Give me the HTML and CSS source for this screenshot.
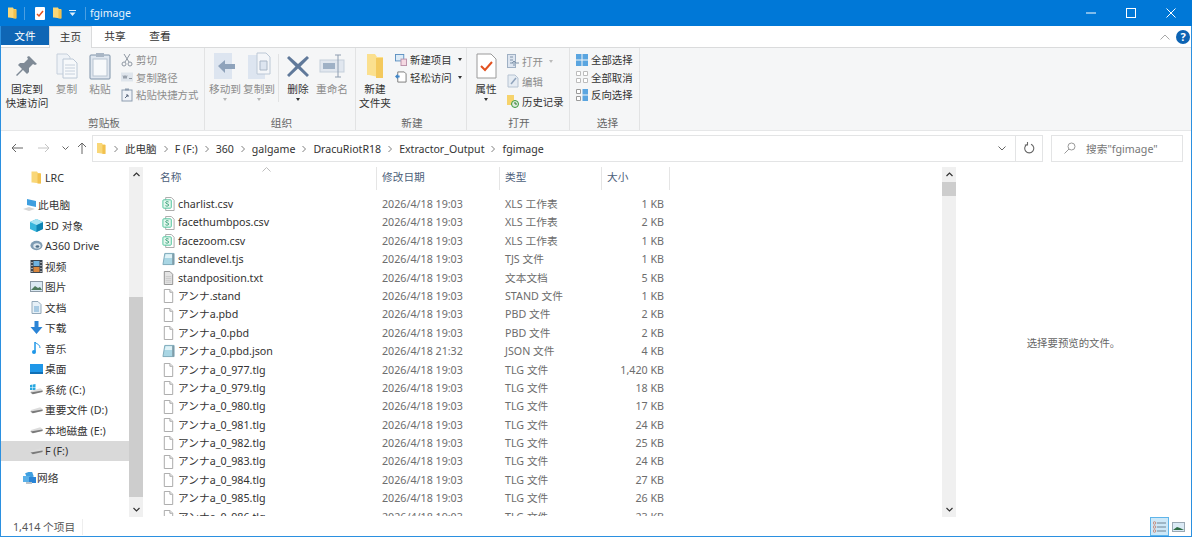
FILE: index.html
```html
<!DOCTYPE html>
<html lang="zh-CN">
<head>
  <meta charset="UTF-8" />
  <title>fgimage</title>
  <link rel="stylesheet" href="styles.css">
</head>
<body>

<!-- shared icons -->
<svg class="defs" width="0" height="0">
  <symbol id="i-folder" viewBox="0 0 10 13">
    <path d="M0 0.5h5.500l1 1.500H9v10.500L1 11.500H0z" fill="#f9d778"/>
    <path d="M6 2.500h3.500v10H6z" fill="#f2c14e"/>
  </symbol>
  <symbol id="i-doc" viewBox="0 0 12 15">
    <path d="M1.500 .5h6l3 3v11h-9z" fill="#fff" stroke="#a5a5a5"/>
    <path d="M7.500 .5v3h3" fill="#eee" stroke="#a5a5a5"/>
  </symbol>
  <symbol id="i-txt" viewBox="0 0 12 15">
    <path d="M1.500 .5h6l3 3v11h-9z" fill="#e4e4e4" stroke="#8d8d8d"/>
    <path d="M3 6h6M3 8h6M3 10h6M3 12h6" stroke="#c8c8c8"/>
  </symbol>
  <symbol id="i-csv" viewBox="0 0 13 15">
    <path d="M3.500 .5h6l3 3v11h-9z" fill="#fff" stroke="#a5a5a5"/>
    <rect x=".5" y="3" width="9" height="9" rx="1" fill="#e5f7ee" stroke="#4cc39a"/>
    <path d="M6.600 5.400C5.600 4.700 3.400 4.900 3.500 6.200c.1 1.300 3.200.9 3.200 2.400 0 1.300-2.300 1.500-3.400.7" fill="none" stroke="#2a9a70"/>
  </symbol>
  <symbol id="i-tjs" viewBox="0 0 14 14">
    <path d="M3 1h10v12H1z" fill="#a9d6e4" stroke="#7ba7b8"/>
    <path d="M4 2h7v4H3z" fill="#dff2f7"/>
    <path d="M11 1.500h2v11.500h-2z" fill="#7f9ca8"/>
  </symbol>
  <symbol id="i-drive" viewBox="0 0 14 8">
    <path d="M1 4l10-3 2.500 2v1.500L3 7.500 .5 6z" fill="#dcdcdc"/>
    <path d="M.5 5.500L13.500 3.500v1.500L3 7.500z" fill="#7a7a7a"/>
  </symbol>
  <symbol id="i-chev" viewBox="0 0 6 8">
    <path d="M1.500 1l3 3-3 3" fill="none" stroke="#808080"/>
  </symbol>
</svg>

<div class="window">

  <div class="titlebar">
    <svg class="qa" width="9" height="12"><use href="#i-folder"/></svg>
    <span class="qa-sep"></span>
    <svg class="qa-check" width="10" height="13" viewBox="0 0 10 13"><rect width="10" height="13" rx="1" fill="#fff"/><path d="M2 7l2 2 4-5" fill="none" stroke="#e2511f" stroke-width="1.500"/></svg>
    <svg class="qa-folder" width="9" height="12"><use href="#i-folder"/></svg>
    <svg class="qa-drop" width="7" height="6" viewBox="0 0 7 6"><path d="M0 0h7v1H0zM.5 2.500h6L3.500 6z" fill="#dfeefa"/></svg>
    <span class="qa-sep second"></span>
    <span class="title">fgimage</span>
    <div class="win-btns">
      <svg width="10" height="10" viewBox="0 0 10 10"><path d="M0 5h10" stroke="#fff"/></svg>
      <svg width="10" height="10" viewBox="0 0 10 10"><rect x=".5" y=".5" width="9" height="9" fill="none" stroke="#fff"/></svg>
      <svg width="10" height="10" viewBox="0 0 10 10"><path d="M.5 .5l9 9M9.500 .5l-9 9" stroke="#fff"/></svg>
    </div>
  </div>

  <div class="tabs">
    <div class="tab file-tab">文件</div>
    <div class="tab active">主页</div>
    <div class="tab">共享</div>
    <div class="tab">查看</div>
    <div class="tabs-right">
      <svg width="10" height="6" viewBox="0 0 10 6"><path d="M.5 5.500L5 1l4.500 4.500" fill="none" stroke="#a8a8a8"/></svg>
      <span class="help">?</span>
    </div>
  </div>

  <div class="ribbon">
    <div class="group g-clip">
      <div class="group-body">
        <div class="big w-pin">
          <svg width="26" height="26" viewBox="0 0 26 26"><path d="M15 3l8 8-2 1-2-1-4 4 0 4-2 2-4-4-6 6-1-1 6-6-4-4 2-2h4l4-4-1-2z" fill="#7f8a96"/></svg>
          <span>固定到<br>快速访问</span>
        </div>
        <div class="big w-copy off">
          <svg width="24" height="26" viewBox="0 0 24 26"><path d="M2 1h10l3 3v17H2z" fill="#eef2f7" stroke="#c6d0dc"/><path d="M8 6h10l4 4v15H8z" fill="#f7f9fb" stroke="#bcc8d6"/><path d="M10 12h10M10 15h10M10 18h10M10 21h10" stroke="#c6d0dc"/></svg>
          <span>复制</span>
        </div>
        <div class="big w-paste off">
          <svg width="22" height="28" viewBox="0 0 22 28"><rect x="1" y="3" width="20" height="24" rx="1" fill="#dfe6ef" stroke="#7f93a9"/><rect x="4" y="7" width="14" height="17" fill="#f7f9fb" stroke="#b8c4d2"/><rect x="7" y="1" width="8" height="4" fill="#a9b6c5"/></svg>
          <span>粘贴</span>
        </div>
        <div class="small-col off">
          <div class="small"><svg width="12" height="14" viewBox="0 0 12 14"><path d="M3 1l5 8M9 1L4 9" stroke="#8e97a2" fill="none"/><circle cx="3" cy="11" r="2" fill="none" stroke="#8e97a2"/><circle cx="9" cy="11" r="2" fill="none" stroke="#8e97a2"/></svg>剪切</div>
          <div class="small"><svg width="12" height="9" viewBox="0 0 12 9"><rect width="12" height="9" fill="#dfe5ec"/><path d="M2 3l1 3 1-3 1 3 1-3M8 6h3" stroke="#8e97a2" fill="none"/></svg>复制路径</div>
          <div class="small"><svg width="12" height="14" viewBox="0 0 12 14"><rect x="1" y="2" width="10" height="11" fill="#eef2f7" stroke="#8e9db0"/><rect x="4" y="0.500" width="4" height="2" fill="#8e9db0"/><path d="M4 10l3-3M5 7h2v2" stroke="#56657a" fill="none"/></svg>粘贴快捷方式</div>
        </div>
      </div>
      <div class="group-name">剪贴板</div>
    </div>

    <div class="group g-org">
      <div class="group-body">
        <div class="big w-move off">
          <svg width="26" height="28" viewBox="0 0 26 28"><path d="M2 1h18v26H2z" fill="#dde5f0"/><path d="M6 14l7-6v4h10v5H13v4z" fill="#8fa3bb"/></svg>
          <span>移动到</span><i class="mini-drop"></i>
        </div>
        <div class="big w-copyto off">
          <svg width="26" height="28" viewBox="0 0 26 28"><path d="M2 3h17v24H2z" fill="#dde5f0"/><path d="M11 1h9l4 4v17H11z" fill="#f4f6f9" stroke="#bcc8d6"/><path d="M14 9h7v9h-7z" fill="#dde5f0" stroke="#aab7c7"/></svg>
          <span>复制到</span><i class="mini-drop"></i>
        </div>
        <span class="vsep"></span>
        <div class="big w-del">
          <svg width="24" height="24" viewBox="0 0 24 24"><path d="M3 2l9 8 9-8 2 2-8.500 8.500L23 21l-2 2-9-8.500L3 23l-2-2 8.500-8.500L1 4z" fill="#60799a"/></svg>
          <span>删除</span><i class="mini-drop dark"></i>
        </div>
        <div class="big w-ren off">
          <svg width="26" height="26" viewBox="0 0 26 26"><rect x="1" y="7" width="24" height="12" fill="#e1e7ef" stroke="#c5cfdb"/><rect x="4" y="10" width="12" height="6" fill="#9fb1c6"/><path d="M19 2v22M16 2h6M16 24h6" stroke="#8e9db0" fill="none"/></svg>
          <span>重命名</span>
        </div>
      </div>
      <div class="group-name">组织</div>
    </div>

    <div class="group g-new">
      <div class="group-body">
        <div class="big w-newdir">
          <svg width="18" height="26" viewBox="0 0 18 26"><path d="M1 1h8l2 3h6v21L3 22H1z" fill="#fbe08f"/><path d="M10 5h7v20h-7z" fill="#f4c95d"/></svg>
          <span>新建<br>文件夹</span>
        </div>
        <div class="small-col">
          <div class="small"><svg width="13" height="13" viewBox="0 0 13 13"><rect x=".5" y=".5" width="9" height="7" fill="#dcebf7" stroke="#5a8fc0"/><rect x="6.500" y="5.500" width="6" height="7" fill="#f5d9e2" stroke="#b890a8"/></svg>新建项目<i class="caret"></i></div>
          <div class="small"><svg width="13" height="13" viewBox="0 0 13 13"><path d="M3 1h7l2 2v9H3z" fill="#fff" stroke="#777"/><path d="M0 6l3-3v2h2v2H3v2z" fill="#3f86c9"/></svg>轻松访问<i class="caret"></i></div>
        </div>
      </div>
      <div class="group-name">新建</div>
    </div>

    <div class="group g-open">
      <div class="group-body">
        <div class="big w-prop">
          <svg width="21" height="26" viewBox="0 0 21 26"><path d="M1 1h14l5 5v19H1z" fill="#fff" stroke="#9a9a9a"/><path d="M5 13l4 4 7-8" fill="none" stroke="#e2511f" stroke-width="2"/></svg>
          <span>属性</span><i class="mini-drop dark"></i>
        </div>
        <div class="small-col tall">
          <div class="small off"><svg width="12" height="14" viewBox="0 0 12 14"><rect x=".5" y=".5" width="8" height="13" fill="#dde5f0" stroke="#9fb0c4"/><path d="M3 3h3M3 6h3M3 9h3" stroke="#7f93a9"/><path d="M7 12V7l-2 2M7 7l2 2h3" stroke="#7f93a9" fill="none"/></svg>打开<i class="caret light"></i></div>
          <div class="small off"><svg width="12" height="14" viewBox="0 0 12 14"><path d="M1 1h7l3 3v9H1z" fill="#e6ecf3" stroke="#b6c3d2"/><path d="M4 10l5-6" stroke="#8fa3bb" stroke-width="1.500"/></svg>编辑</div>
          <div class="small"><svg width="12" height="14" viewBox="0 0 12 14"><path d="M0 1h7v10H0z" fill="#f6d36c"/><circle cx="8" cy="10" r="3.500" fill="#dfe9df" stroke="#3c9a3c"/><path d="M8 8v2h2" stroke="#2f7d2f" fill="none"/></svg>历史记录</div>
        </div>
      </div>
      <div class="group-name">打开</div>
    </div>

    <div class="group g-select">
      <div class="group-body">
        <div class="small-col">
          <div class="small"><svg width="12" height="12" viewBox="0 0 12 12"><path d="M0 0h5.500v5.500H0zM6.500 0H12v5.500H6.500zM0 6.500h5.500V12H0zM6.500 6.500H12V12H6.500z" fill="#5aa5e0"/></svg>全部选择</div>
          <div class="small"><svg width="12" height="12" viewBox="0 0 12 12"><path d="M.5 .5h4v4h-4zM7.500 .5h4v4h-4zM.5 7.500h4v4h-4zM7.500 7.500h4v4h-4z" fill="#fff" stroke="#bcbcbc"/></svg>全部取消</div>
          <div class="small"><svg width="12" height="12" viewBox="0 0 12 12"><path d="M.5 .5h4v4h-4zM.5 7.500h4v4h-4z" fill="#fff" stroke="#9a9a9a"/><path d="M6.500 0H12v5.500H6.500zM6.500 6.500H12V12H6.500z" fill="#5aa5e0"/></svg>反向选择</div>
        </div>
      </div>
      <div class="group-name">选择</div>
    </div>
  </div>

  <div class="navbar">
    <div class="nav-btns">
      <svg width="12" height="10" viewBox="0 0 12 10"><path d="M1 5h11M5 1L1 5l4 4" fill="none" stroke="#666"/></svg>
      <svg width="12" height="10" viewBox="0 0 12 10"><path d="M0 5h11M7 1l4 4-4 4" fill="none" stroke="#c4c4c4"/></svg>
      <svg width="7" height="5" viewBox="0 0 7 5"><path d="M.5 .5l3 3 3-3" fill="none" stroke="#666"/></svg>
      <svg width="10" height="12" viewBox="0 0 10 12"><path d="M5 12V1M1 5l4-4 4 4" fill="none" stroke="#666"/></svg>
    </div>
    <div class="address">
      <svg width="9" height="13"><use href="#i-folder"/></svg>
      <svg class="crumb-first" width="6" height="8"><use href="#i-chev"/></svg>
      <span>此电脑</span>
      <svg width="6" height="8"><use href="#i-chev"/></svg>
      <span>F (F:)</span>
      <svg width="6" height="8"><use href="#i-chev"/></svg>
      <span>360</span>
      <svg width="6" height="8"><use href="#i-chev"/></svg>
      <span>galgame</span>
      <svg width="6" height="8"><use href="#i-chev"/></svg>
      <span>DracuRiotR18</span>
      <svg width="6" height="8"><use href="#i-chev"/></svg>
      <span>Extractor_Output</span>
      <svg width="6" height="8"><use href="#i-chev"/></svg>
      <span>fgimage</span>
      <svg class="addr-drop" width="8" height="5" viewBox="0 0 8 5"><path d="M.5 .5L4 4 7.500 .5" fill="none" stroke="#666"/></svg>
    </div>
    <div class="refresh">
      <svg width="11" height="12" viewBox="0 0 11 12"><path d="M7 2.200a4.500 4.500 0 1 1-3.500 0M3.500 0v3H.8" fill="none" stroke="#666" stroke-width="1.100"/></svg>
    </div>
    <div class="search">
      <svg width="12" height="12" viewBox="0 0 12 12"><circle cx="7.500" cy="4.500" r="3.500" fill="none" stroke="#999"/><path d="M5 7l-4.500 4.500" stroke="#999"/></svg>
      <span>搜索"fgimage"</span>
    </div>
  </div>

  <div class="main">
    <div class="sidebar">
      <div class="side-item child"><svg width="9" height="13"><use href="#i-folder"/></svg>LRC</div>
      <div class="side-item root gap"><svg width="14" height="13" viewBox="0 0 14 13"><path d="M4 1l9 2v6L4 7z" fill="#3f9fe0"/><path d="M0 11l6-2 6 2-6 2z" fill="#d5d5d5"/></svg>此电脑</div>
      <div class="side-item child"><svg width="13" height="13" viewBox="0 0 13 13"><path d="M6.500 0L13 3v7l-6.500 3L0 10V3z" fill="#39b6dc"/><path d="M6.500 6L13 3v7l-6.500 3z" fill="#0f84b3"/><path d="M6.500 6L0 3l6.500-3L13 3z" fill="#a9e4f3"/></svg>3D 对象</div>
      <div class="side-item child"><svg width="14" height="11" viewBox="0 0 14 11"><ellipse cx="7" cy="5.500" rx="6.500" ry="5" fill="#7f9cb3"/><ellipse cx="7.500" cy="6" rx="4" ry="2.800" fill="#dde7ee"/><ellipse cx="8" cy="6.500" rx="2" ry="1.300" fill="#4f6f88"/></svg>A360 Drive</div>
      <div class="side-item child"><svg width="12" height="13" viewBox="0 0 12 13"><rect width="12" height="13" fill="#3d4650"/><path d="M3 1h6v5H3z" fill="#6fb3e0"/><path d="M3 7h6v5H3z" fill="#d9873e"/><path d="M1 2h1v1H1zM1 5h1v1H1zM1 8h1v1H1zM1 11h1v1H1zM10 2h1v1h-1zM10 5h1v1h-1zM10 8h1v1h-1zM10 11h1v1h-1z" fill="#fff"/></svg>视频</div>
      <div class="side-item child"><svg width="13" height="11" viewBox="0 0 13 11"><rect x=".5" y=".5" width="12" height="10" fill="#dbe9f3" stroke="#8c9aa6"/><path d="M1 9l4-4 3 2 2-1 2 3z" fill="#4d7a5c"/></svg>图片</div>
      <div class="side-item child"><svg width="11" height="13" viewBox="0 0 11 13"><path d="M1 .5h6l3 3v9H1z" fill="#e6f0f7" stroke="#93a9ba"/><path d="M3 6h5M3 8h5M3 10h5" stroke="#6aa5cf"/></svg>文档</div>
      <div class="side-item child"><svg width="12" height="13" viewBox="0 0 12 13"><path d="M4 0h4v6h4l-6 7-6-7h4z" fill="#2a84d6"/></svg>下载</div>
      <div class="side-item child"><svg width="9" height="14" viewBox="0 0 9 14"><path d="M3 1v9.500" stroke="#1f97e8" stroke-width="1.500" fill="none"/><path d="M3 1c1 2 5 2 5 6" stroke="#1f97e8" fill="none"/><ellipse cx="2" cy="11" rx="2" ry="2" fill="#1f97e8"/></svg>音乐</div>
      <div class="side-item child"><svg width="13" height="10" viewBox="0 0 13 10"><rect width="13" height="10" fill="#1f97e8"/><rect y="8" width="13" height="2" fill="#0f6fb5"/></svg>桌面</div>
      <div class="side-item child"><svg width="13" height="11" viewBox="0 0 13 11"><path d="M0 1l2.500-.5V3H0zM3 .4L5.500 0v3H3zM0 3.500h2.500V6H0zM3 3.500h2.500V6H3z" fill="#27a7e0"/><use href="#i-drive" y="3" width="13" height="8"/></svg>系统 (C:)</div>
      <div class="side-item child"><svg width="13" height="8"><use href="#i-drive"/></svg>重要文件 (D:)</div>
      <div class="side-item child"><svg width="13" height="8"><use href="#i-drive"/></svg>本地磁盘 (E:)</div>
      <div class="side-item child selected"><svg width="13" height="8"><use href="#i-drive"/></svg>F (F:)</div>
      <div class="side-item root gap"><svg width="13" height="12" viewBox="0 0 13 12"><rect x="3" y="0" width="7" height="6" fill="#3f9fe0" transform="rotate(-20 6 3)"/><rect x="0" y="4" width="7" height="6" fill="#5ab0e8"/><rect x="6" y="5" width="7" height="6" fill="#2a84d6"/><path d="M3 10h6v2H3z" fill="#b9c4cc"/></svg>网络</div>
    </div>
    <div class="scrollbar nav-scroll">
      <svg width="7" height="5" viewBox="0 0 7 5"><path d="M.5 4L3.500 1l3 3" fill="none" stroke="#333" stroke-width="1.200"/></svg>
      <div class="track"><div class="thumb side-thumb"></div></div>
      <svg width="7" height="5" viewBox="0 0 7 5"><path d="M.5 1l3 3 3-3" fill="none" stroke="#333" stroke-width="1.200"/></svg>
    </div>

    <div class="files">
      <div class="file-head">
        <div class="hcell name-col">名称
          <svg class="sort" width="9" height="5" viewBox="0 0 9 5"><path d="M.5 4.500l4-4 4 4" fill="none" stroke="#bdbdbd"/></svg>
        </div>
        <div class="hcell">修改日期</div>
        <div class="hcell">类型</div>
        <div class="hcell">大小</div>
      </div>
      <div class="rows" id="rows"></div>
    </div>
    <div class="scrollbar list-scroll">
      <svg width="7" height="5" viewBox="0 0 7 5"><path d="M.5 4L3.500 1l3 3" fill="none" stroke="#333" stroke-width="1.200"/></svg>
      <div class="track"><div class="thumb list-thumb"></div></div>
      <svg width="7" height="5" viewBox="0 0 7 5"><path d="M.5 1l3 3 3-3" fill="none" stroke="#333" stroke-width="1.200"/></svg>
    </div>

    <div class="preview">选择要预览的文件。</div>
  </div>

  <div class="statusbar">
    <span class="count">1,414 个项目</span>
    <div class="view-btns">
      <div class="view-btn on"><svg width="13" height="12" viewBox="0 0 13 12"><path d="M4 2h9M4 6h9M4 10h9" stroke="#6f8494"/><circle cx="1.500" cy="2" r="1.300" fill="none" stroke="#c98a7a"/><circle cx="1.500" cy="6" r="1.300" fill="none" stroke="#c98a7a"/><circle cx="1.500" cy="10" r="1.300" fill="none" stroke="#c98a7a"/></svg></div>
      <div class="view-btn"><svg width="13" height="10" viewBox="0 0 13 10"><rect x=".5" y=".5" width="12" height="9" fill="#dbeaf5" stroke="#9aa8b3"/><path d="M1 8l4-3 3 1 4 2z" fill="#2f6d45"/></svg></div>
    </div>
  </div>
</div>

<script>
  const files = [
    ["charlist.csv", "i-csv", "2026/4/18 19:03", "XLS 工作表", "1 KB"],
    ["facethumbpos.csv", "i-csv", "2026/4/18 19:03", "XLS 工作表", "2 KB"],
    ["facezoom.csv", "i-csv", "2026/4/18 19:03", "XLS 工作表", "1 KB"],
    ["standlevel.tjs", "i-tjs", "2026/4/18 19:03", "TJS 文件", "1 KB"],
    ["standposition.txt", "i-txt", "2026/4/18 19:03", "文本文档", "5 KB"],
    ["アンナ.stand", "i-doc", "2026/4/18 19:03", "STAND 文件", "1 KB"],
    ["アンナa.pbd", "i-doc", "2026/4/18 19:03", "PBD 文件", "2 KB"],
    ["アンナa_0.pbd", "i-doc", "2026/4/18 19:03", "PBD 文件", "2 KB"],
    ["アンナa_0.pbd.json", "i-tjs", "2026/4/18 21:32", "JSON 文件", "4 KB"],
    ["アンナa_0_977.tlg", "i-doc", "2026/4/18 19:03", "TLG 文件", "1,420 KB"],
    ["アンナa_0_979.tlg", "i-doc", "2026/4/18 19:03", "TLG 文件", "18 KB"],
    ["アンナa_0_980.tlg", "i-doc", "2026/4/18 19:03", "TLG 文件", "17 KB"],
    ["アンナa_0_981.tlg", "i-doc", "2026/4/18 19:03", "TLG 文件", "24 KB"],
    ["アンナa_0_982.tlg", "i-doc", "2026/4/18 19:03", "TLG 文件", "25 KB"],
    ["アンナa_0_983.tlg", "i-doc", "2026/4/18 19:03", "TLG 文件", "24 KB"],
    ["アンナa_0_984.tlg", "i-doc", "2026/4/18 19:03", "TLG 文件", "27 KB"],
    ["アンナa_0_985.tlg", "i-doc", "2026/4/18 19:03", "TLG 文件", "26 KB"],
    ["アンナa_0_986.tlg", "i-doc", "2026/4/18 19:03", "TLG 文件", "23 KB"]
  ];

  // 文件列表
  document.getElementById("rows").innerHTML = files.map(f => `
    <div class="row">
      <div class="cell-name"><svg width="13" height="14"><use href="#${f[1]}"/></svg>${f[0]}</div>
      <div>${f[2]}</div>
      <div>${f[3]}</div>
      <div class="cell-size">${f[4]}</div>
    </div>`).join("");
</script>
</body>
</html>
```

FILE: styles.css
```css
* { box-sizing: border-box; }

html, body {
  margin: 0;
  height: 100%;
  overflow: hidden;
}

body {
  font-family: "Noto Sans", "Noto Sans CJK SC", sans-serif;
  font-size: 10.7px;
  color: #333;
  background: white;
}

svg { flex: none; display: block; }
.defs { position: absolute; }

.window {
  width: 1192px;
  height: 537px;
  display: flex;
  flex-direction: column;
  border: 1px solid #2b90e0;
  border-top: none;
}

/* title bar */
.titlebar {
  height: 26px;
  margin: 0 -1px;
  background: #0078d7;
  display: flex;
  align-items: center;
  padding-left: 8px;
  flex: none;
}

.qa-sep {
  width: 1px;
  height: 13px;
  background: #4b9fe2;
  margin: 0 10px 0 7px;
}

.qa-sep.second { margin: 0 4px 0 9px; }
.qa-folder { margin-left: 8px; }
.qa-drop { margin-left: 7px; }

.title {
  color: #e9f3fb;
  font-size: 10.5px;
}

.win-btns {
  margin-left: auto;
  display: flex;
  gap: 30px;
  padding-right: 16px;
}

/* tabs */
.tabs {
  height: 21px;
  display: flex;
  flex: none;
  align-items: stretch;
  font-size: 10.7px;
}

.tab {
  width: 44px;
  line-height: 20px;
  text-align: center;
}

.file-tab {
  width: 48px;
  height: 19px;
  background: #0f66b5;
  color: white;
}

.tab.active {
  width: 43px;
  background: #f5f6f7;
  border: 1px solid #dadbdc;
  border-bottom: none;
  position: relative;
  z-index: 1;
  height: 22px;
}

.tab.active + .tab { width: 46px; }

.tabs-right {
  margin-left: auto;
  display: flex;
  align-items: center;
  gap: 6px;
  padding-right: 1px;
}

.help {
  width: 14px;
  height: 14px;
  border-radius: 50%;
  background: #0c63b3;
  color: white;
  font-weight: bold;
  font-size: 11px;
  line-height: 14px;
  text-align: center;
}

/* ribbon */
.ribbon {
  height: 84px;
  flex: none;
  display: flex;
  background: #f5f6f7;
  border-top: 1px solid #dadbdc;
  border-bottom: 1px solid #e6e7e8;
}

.group {
  display: flex;
  flex-direction: column;
  border-right: 1px solid #e2e3e4;
  padding-top: 2px;
}

.group-body {
  flex: none;
  height: 67px;
  display: flex;
  align-items: flex-start;
}

.group-name {
  height: 13px;
  line-height: 13px;
  text-align: center;
  color: #666;
}

.g-clip { width: 204px; padding-left: 3px; }
.g-org { width: 151px; padding-left: 3px; }
.g-new { width: 111px; padding-left: 2px; }
.g-open { width: 103px; padding-left: 2px; }
.g-select { width: 70px; padding-left: 6px; }

.big {
  display: flex;
  flex-direction: column;
  align-items: center;
  text-align: center;
  line-height: 14px;
  height: 60px;
  padding-top: 1px;
  position: relative;
  white-space: nowrap;
}

.big svg { height: 30px; margin-bottom: 1px; }
.big span { display: block; }

.w-pin { width: 46px; }
.w-copy { width: 33px; }
.w-paste { width: 34px; }
.w-move { width: 34px; }
.w-copyto { width: 34px; }
.w-del { width: 34px; }
.w-ren { width: 34px; }
.w-newdir { width: 34px; }
.w-prop { width: 34px; }

.vsep {
  width: 1px;
  height: 48px;
  background: #e2e3e4;
  margin: 4px 2px 0;
}

.off { color: #8c8c8c; }

.mini-drop {
  display: block;
  width: 0;
  height: 0;
  margin-top: 2px;
  border: 2.5px solid transparent;
  border-top: 3px solid #b5b5b5;
  border-bottom: none;
}

.mini-drop.dark { border-top-color: #333; }

.small-col {
  margin-left: 4px;
  padding-top: 1px;
  display: flex;
  flex-direction: column;
  font-size: 10.4px;
}

.small {
  display: flex;
  align-items: center;
  gap: 3px;
  height: 17.5px;
  white-space: nowrap;
}

.small svg { width: 12px; height: 14px; }
.g-new .small-col { margin-left: 3px; }
.g-select .small-col { margin-left: 0; }

.small-col.tall { padding-top: 2px; gap: 2px; }
.small-col.tall .small { height: 18px; }

.caret {
  width: 0;
  height: 0;
  margin-left: 3px;
  border: 2.5px solid transparent;
  border-top: 3px solid #333;
  border-bottom: none;
}

.caret.light { border-top-color: #bbb; }

/* address row */
.navbar {
  height: 34px;
  flex: none;
  display: flex;
  align-items: center;
  padding-right: 8px;
}

.nav-btns {
  width: 91px;
  display: flex;
  align-items: center;
  padding-left: 10px;
  gap: 15px;
}

.nav-btns svg:nth-child(3) { margin-left: -3px; margin-right: -7px; }

.address, .refresh, .search {
  height: 27px;
  border: 1px solid #e3e4e5;
  display: flex;
  align-items: center;
}

.address {
  width: 924px;
  padding-left: 4px;
  padding-top: 1px;
  gap: 6px;
  font-size: 10.6px;
  border-right: none;
  white-space: nowrap;
}

.address .crumb-first { margin-left: 1px; }
.addr-drop { margin-left: auto; margin-right: 9px; }

.refresh {
  width: 28px;
  justify-content: center;
}

.search {
  width: 132px;
  margin-left: 8px;
  padding-left: 12px;
  gap: 10px;
  color: #777;
}

/* main area */
.main {
  flex: 1;
  display: flex;
  min-height: 0;
  padding-top: 2px;
}

.sidebar {
  width: 128px;
  flex: none;
  padding-top: 0.5px;
}

.side-item {
  height: 20.5px;
  display: flex;
  align-items: center;
  white-space: nowrap;
}

.side-item.child { padding-left: 29px; }
.side-item.child svg { margin-right: 2px; width: 13px; }
.side-item.root { padding-left: 22px; }
.side-item.root svg { margin-right: 1px; }
.side-item.gap { margin-top: 6.5px; }
.side-item.selected { background: #d9d9d9; }

.scrollbar {
  width: 14px;
  flex: none;
  background: #f0f0f0;
  display: flex;
  flex-direction: column;
  align-items: center;
  padding: 5px 0;
  gap: 5px;
}

.track {
  flex: 1;
  width: 100%;
  display: flex;
  flex-direction: column;
}

.thumb {
  width: 100%;
  background: #cdcdcd;
}

.side-thumb { height: 200px; margin-top: 115px; }
.list-thumb { height: 14px; }

.files {
  width: 799px;
  flex: none;
  padding-left: 12px;
  min-width: 0;
}

.file-head, .row {
  display: grid;
  grid-template-columns: 222px 123px 102px 68px;
}

.file-head {
  height: 23px;
  margin-bottom: 5px;
}

.hcell {
  padding-left: 5px;
  line-height: 21px;
  color: #4c607a;
  border-right: 1px solid #e5e5e5;
  position: relative;
}

.sort {
  position: absolute;
  left: 107px;
  top: 0;
}

.rows {
  height: 321px;
  overflow: hidden;
}

.row {
  height: 18.4px;
  line-height: 18.4px;
  color: #6d6d6d;
}

.row > div { padding-left: 5px; white-space: nowrap; }

.row .cell-name {
  padding-left: 7px;
  color: #333;
  display: flex;
  align-items: center;
  gap: 3px;
}

.row .cell-size {
  text-align: right;
  padding-right: 6px;
}

.preview {
  flex: 1;
  display: flex;
  align-items: center;
  justify-content: center;
  color: #666;
  font-size: 10.4px;
}

/* status bar */
.statusbar {
  height: 19px;
  flex: none;
  display: flex;
  align-items: center;
  padding-left: 12px;
}

.count {
  width: 70px;
  border-right: 1px solid #eee;
  line-height: 16px;
  color: #555;
}

.view-btns {
  margin-left: auto;
  display: flex;
  align-items: center;
  padding-right: 3px;
  height: 100%;
}

.view-btn {
  width: 19px;
  height: 19px;
  display: flex;
  align-items: center;
  justify-content: center;
}

.view-btn.on {
  background: #cde8f8;
  border: 1px solid #5fb5ea;
}
```
